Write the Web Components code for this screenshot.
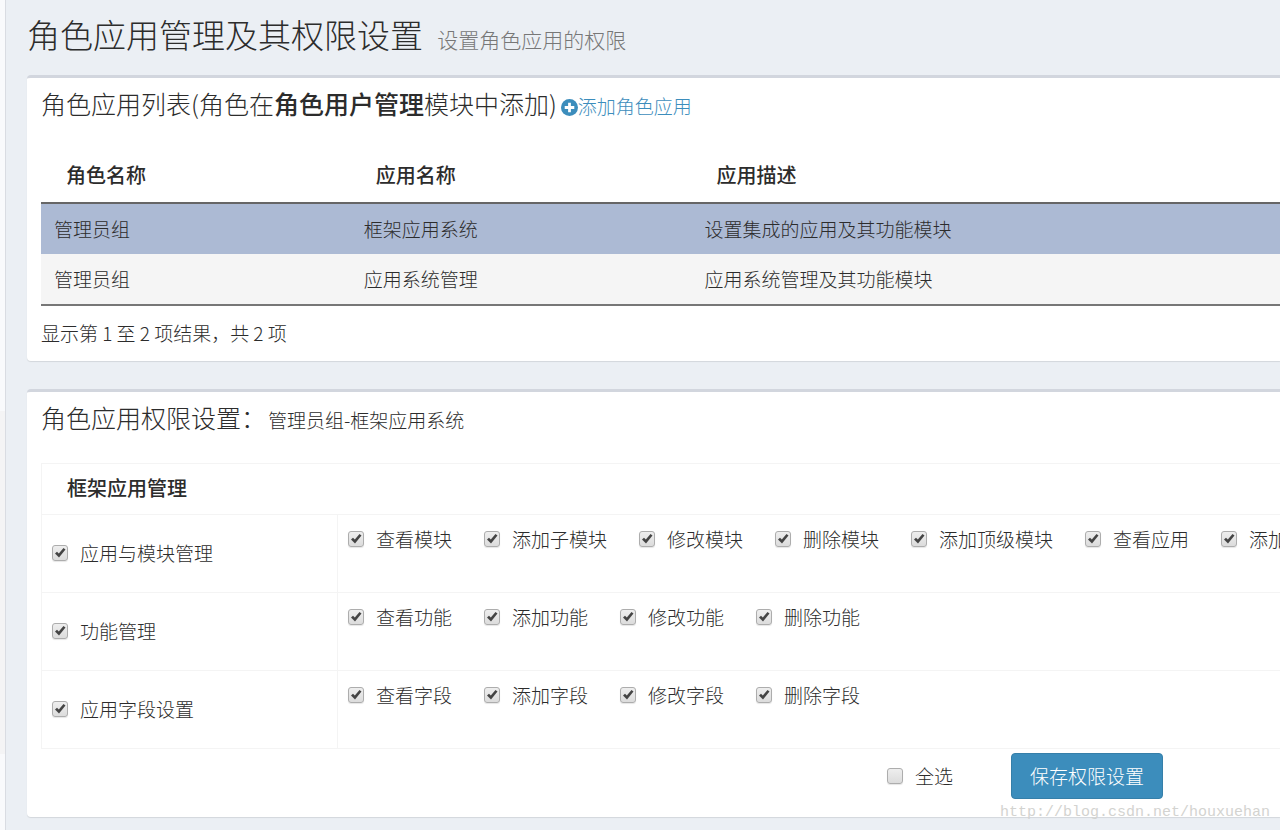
<!DOCTYPE html>
<html lang="zh-CN">
<head>
<meta charset="utf-8">
<title>角色应用管理及其权限设置</title>
<style>
html, body{
    margin: 0;
    min-height: 100%;
}
body{
    background-color: #ebeff4;
    color: #2c2c2c;
    font-family: "Noto Sans CJK SC", sans-serif;
    font-weight: 300;
    font-size: 19px;
    line-height: 28px;
    overflow: hidden;
}
</style>
</head>
<body>
<role-page></role-page>

<template id="page-template">
<style>
:host{
    display: flex;
    min-height: 100vh;
}
.sidebar{
    flex: none;
    width: 6px;
    background: linear-gradient(#f9fafc 48%, #f4f4f5 48%, #f4f4f5 88%, #f9fafc 88%);
    border-right: 1px solid #d9dce2;
    box-sizing: border-box;
}
main{
    flex: 1;
    min-width: 0;
    padding: 10px 0 12px 21px;
}
h1{
    margin: 0 0 12px;
    font-size: 33px;
    line-height: 48px;
    font-weight: 300;
}
h1 small{
    margin-left: 7px;
    font-size: 21px;
    font-weight: 300;
    color: #777;
}
h2{
    margin: 0;
    font-size: 25px;
    line-height: 32px;
    font-weight: 300;
}
h2 b{
    font-weight: 500;
}
h2 span{
    margin-left: 2px;
    font-size: 19px;
}
a{
    color: #3c8dbc;
    font-size: 19px;
    text-decoration: none;
}
a svg{
    width: 17px;
    height: 17px;
    margin-left: 4px;
    vertical-align: -2px;
}
role-table{
    margin-top: 25px;
}
.info{
    margin: 13px 0 0;
}
permission-table{
    margin-top: 27px;
}
.actions{
    display: flex;
    align-items: center;
    justify-content: flex-end;
    gap: 58px;
    padding: 4px 117px 4px 0;
}
button{
    padding: 8px 18px;
    border: 1px solid #367fa9;
    border-radius: 4px;
    background-color: #3c8dbc;
    color: #fff;
    font: inherit;
}
.watermark{
    position: absolute;
    right: 10px;
    bottom: 9px;
    font: 15px "Liberation Mono", monospace;
    color: #d3d3d0;
}
</style>
<div class="sidebar"></div>
<main>
    <h1>角色应用管理及其权限设置 <small>设置角色应用的权限</small></h1>
    <content-box>
        <h2>角色应用列表(角色在<b>角色用户管理</b>模块中添加)<a href="#add"><svg viewBox="0 0 16 16" aria-hidden="true"><circle cx="8" cy="8" r="8" fill="#3c8dbc"/><path d="M8 3.500v9M3.500 8h9" stroke="#fff" stroke-width="2.600"/></svg>添加角色应用</a></h2>
        <role-table></role-table>
        <p class="info">显示第 1 至 2 项结果，共 2 项</p>
    </content-box>
    <content-box>
        <h2>角色应用权限设置：<span>管理员组-框架应用系统</span></h2>
        <permission-table></permission-table>
        <div class="actions">
            <check-item>全选</check-item>
            <button type="button">保存权限设置</button>
        </div>
    </content-box>
</main>
<div class="watermark">http://blog.csdn.net/houxuehan</div>
</template>

<template id="box-template">
<style>
:host{
    display: block;
    margin-bottom: 28px;
    padding: 9px 0 14px 14px;
    border-top: 3px solid #d2d6de;
    border-radius: 4px 0 0 4px;
    background-color: #fff;
    box-shadow: 0 1px 1px rgba(0, 0, 0, 0.1);
}
</style>
<slot></slot>
</template>

<template id="check-template">
<style>
:host{
    display: inline-block;
}
label{
    display: flex;
    align-items: center;
    gap: 12px;
    white-space: nowrap;
}
input{
    appearance: none;
    flex: none;
    width: 16px;
    height: 16px;
    margin: 0;
    border: 1px solid #adadad;
    border-radius: 3px;
    background: linear-gradient(#eee, #dcdcdc);
    box-shadow: 0 1px 1px rgba(0, 0, 0, 0.1);
}
.box{
    display: grid;
}
.box > *{
    grid-area: 1 / 1;
}
svg{
    width: 16px;
    height: 16px;
    pointer-events: none;
    visibility: hidden;
}
input:checked + svg{
    visibility: visible;
}
</style>
<label>
    <span class="box">
        <input type="checkbox">
        <svg viewBox="0 0 16 16" aria-hidden="true"><path d="M3 8.500 5 6.700l1.800 1.900L11.500 3 13.500 4.600 7 12.500z" fill="#444"/></svg>
    </span>
    <slot></slot>
</label>
</template>

<template id="role-table-template">
<style>
:host{
    display: block;
}
table{
    width: 100%;
    border-collapse: collapse;
    table-layout: fixed;
    border-bottom: 2px solid #777;
}
th, td{
    padding: 11px 13px;
    text-align: left;
    font-weight: 300;
}
th{
    padding: 14px 25px 13px;
    font-size: 20px;
    font-weight: 500;
    border-bottom: 2px solid #666;
}
tr.selected{
    background-color: #acbad4;
}
tr.odd{
    background-color: #f5f5f5;
}
.name{
    width: 25%;
}
.app{
    width: 27.5%;
}
</style>
<table>
    <colgroup><col class="name"><col class="app"><col></colgroup>
    <thead><tr><th>角色名称</th><th>应用名称</th><th>应用描述</th></tr></thead>
    <tbody>
        <tr class="selected"><td>管理员组</td><td>框架应用系统</td><td>设置集成的应用及其功能模块</td></tr>
        <tr class="odd"><td>管理员组</td><td>应用系统管理</td><td>应用系统管理及其功能模块</td></tr>
    </tbody>
</table>
</template>

<template id="permission-table-template">
<style>
:host{
    display: block;
    overflow: hidden;
}
table{
    width: 100%;
    border-collapse: collapse;
    table-layout: fixed;
}
th, td{
    border: 1px solid #f4f4f4;
    border-right: 0;
    text-align: left;
    font-weight: 300;
}
thead th{
    padding: 10px 25px 12px;
    font-size: 20px;
    font-weight: 500;
}
tbody th{
    padding: 0 0 2px 10px;
    vertical-align: middle;
}
td{
    padding: 10px 10px 39px;
}
.list{
    display: flex;
    gap: 32px;
}
.group{
    width: 296px;
}
</style>
<table>
    <colgroup><col class="group"><col></colgroup>
    <thead><tr><th colspan="2">框架应用管理</th></tr></thead>
    <tbody></tbody>
</table>
</template>

<script>
function attach(el, id) {
    const shadowRoot = el.attachShadow({ mode: 'open' });
    shadowRoot.appendChild(document.getElementById(id).content.cloneNode(true));
    return shadowRoot;
}

const permissions = [
    ['应用与模块管理', ['查看模块', '添加子模块', '修改模块', '删除模块', '添加顶级模块', '查看应用', '添加应用']],
    ['功能管理', ['查看功能', '添加功能', '修改功能', '删除功能']],
    ['应用字段设置', ['查看字段', '添加字段', '修改字段', '删除字段']]
];

class CheckItem extends HTMLElement {
    constructor() {
        super();
        const root = attach(this, 'check-template');
        root.querySelector('input').checked = this.hasAttribute('checked');
    }
}

class ContentBox extends HTMLElement {
    constructor() {
        super();
        attach(this, 'box-template');
    }
}

class RoleTable extends HTMLElement {
    constructor() {
        super();
        attach(this, 'role-table-template');
    }
}

class PermissionTable extends HTMLElement {
    constructor() {
        super();
        const root = attach(this, 'permission-table-template');
        root.querySelector('tbody').innerHTML = permissions.map(([name, items]) => `
            <tr>
                <th><check-item checked>${name}</check-item></th>
                <td><div class="list">${items.map(item => `<check-item checked>${item}</check-item>`).join('')}</div></td>
            </tr>`).join('');
    }
}

class RolePage extends HTMLElement {
    constructor() {
        super();
        attach(this, 'page-template');
    }
}

customElements.define('check-item', CheckItem);
customElements.define('content-box', ContentBox);
customElements.define('role-table', RoleTable);
customElements.define('permission-table', PermissionTable);
customElements.define('role-page', RolePage);
</script>
</body>
</html>
